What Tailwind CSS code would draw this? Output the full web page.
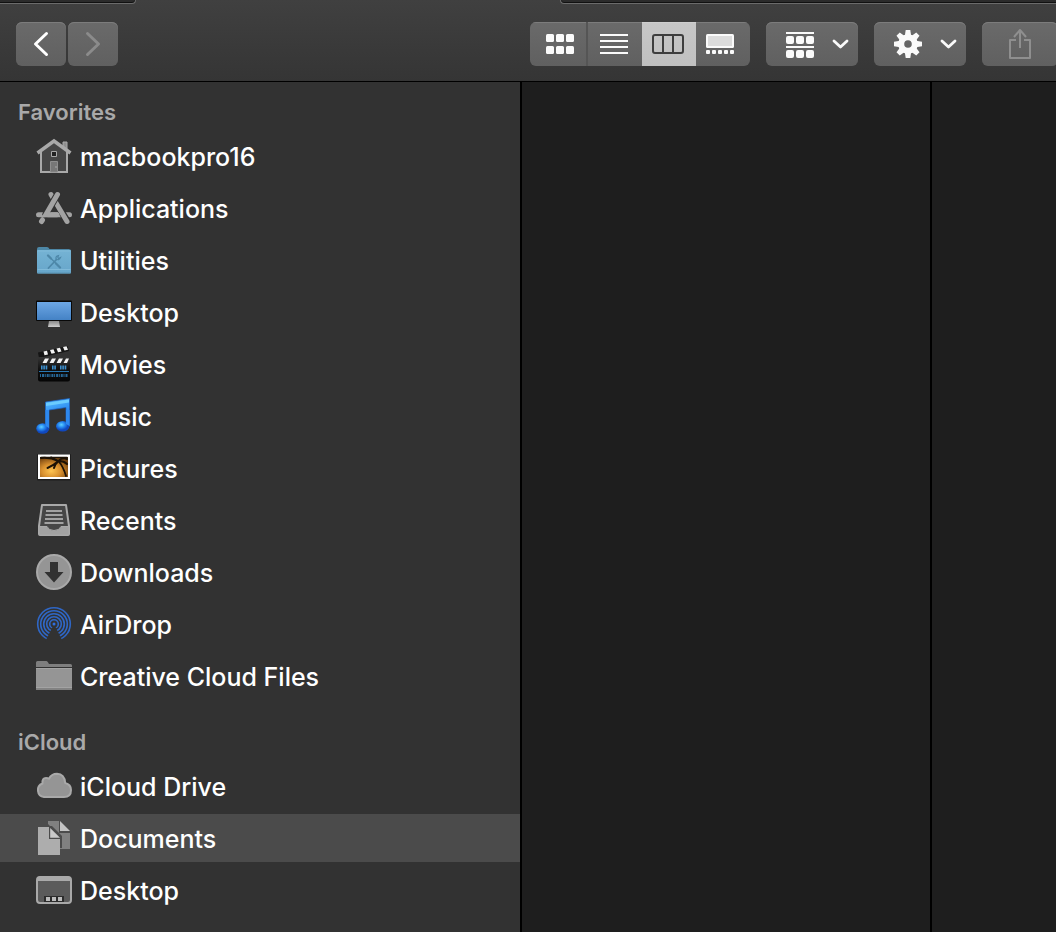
<!DOCTYPE html>
<html lang="en">
<head>
<meta charset="utf-8">
<meta name="viewport" content="width=device-width, initial-scale=1">
<title>Documents</title>
<script src="https://cdn.jsdelivr.net/npm/@tailwindcss/browser@4"></script>
</head>
<body class="flex h-screen flex-col overflow-hidden bg-[#1e1e1e] font-['Inter','Liberation_Sans',sans-serif] text-white">

<header class="shrink-0 overflow-hidden border-b border-black bg-linear-to-b from-[#404040] to-[#353535]">
  <!-- lower edges of the tabs above the toolbar -->
  <div class="flex h-1" aria-hidden="true">
    <div class="w-[136px] rounded-br-lg border-r border-b border-[#6b6b6b] bg-[#2b2b2b] shadow-[inset_0_-1px_0_#111]"></div>
    <div class="ml-[424px] flex-1 rounded-bl-lg border-b border-l border-[#6b6b6b] bg-[#2b2b2b] shadow-[inset_0_-1px_0_#111]"></div>
  </div>
  <div class="flex pt-[18px] pb-[15px]">
    <nav class="flex w-[530px] shrink-0 gap-[2px] pl-4" aria-label="History">
      <button type="button" aria-label="Back" class="flex h-11 w-[50px] items-center justify-center rounded-md bg-linear-to-b from-[#6a6a6a] to-[#606060] shadow-[inset_0_1px_0_#7c7c7c]">
        <svg width="16" height="26" viewBox="0 0 16 26" fill="none" stroke="#fff" stroke-width="3" stroke-linecap="round" stroke-linejoin="round"><path d="M13.500 2.500 2.500 13l11 10.500"/></svg>
      </button>
      <button type="button" aria-label="Forward" class="flex h-11 w-[50px] items-center justify-center rounded-md bg-linear-to-b from-[#6a6a6a] to-[#606060] shadow-[inset_0_1px_0_#7c7c7c]">
        <svg width="16" height="26" viewBox="0 0 16 26" fill="none" stroke="#8b8b8b" stroke-width="3" stroke-linecap="round" stroke-linejoin="round"><path d="m2.500 2.500 11 10.500-11 10.500"/></svg>
      </button>
    </nav>
    <div class="flex gap-4">
      <div class="flex overflow-hidden rounded-md bg-linear-to-b from-[#6a6a6a] to-[#606060]" role="group" aria-label="View">
        <button type="button" aria-label="Icon view" class="flex h-11 w-[58px] items-center border-r-2 border-[#555] pl-4 shadow-[inset_0_1px_0_#7c7c7c]">
          <svg width="28" height="20" fill="#fafafa"><rect width="8" height="8" rx="1.500"/><rect x="10" width="8" height="8" rx="1.500"/><rect x="20" width="8" height="8" rx="1.500"/><rect y="12" width="8" height="8" rx="1.500"/><rect x="10" y="12" width="8" height="8" rx="1.500"/><rect x="20" y="12" width="8" height="8" rx="1.500"/></svg>
        </button>
        <button type="button" aria-label="List view" class="flex h-11 w-[54px] items-center pl-3 shadow-[inset_0_1px_0_#7c7c7c]">
          <svg width="28" height="20" fill="#fafafa"><path d="M0 0h28v2H0zM0 6h28v2H0zM0 12h28v2H0zM0 18h28v2H0z"/></svg>
        </button>
        <button type="button" aria-label="Column view" aria-pressed="true" class="flex h-11 w-[54px] items-center bg-linear-to-b from-[#c7c7c7] to-[#c0c0c0] pl-[10px] shadow-[inset_0_1px_0_#cfcfcf]">
          <svg width="32" height="20" fill="none" stroke="#3e3e3e" stroke-width="2"><rect x="1" y="1" width="30" height="18" rx="2"/><path d="M11 1v18M21 1v18"/></svg>
        </button>
        <button type="button" aria-label="Gallery view" class="flex h-11 w-[54px] items-center pl-[10px] shadow-[inset_0_1px_0_#7c7c7c]">
          <svg width="28" height="20" fill="#fafafa"><rect width="28" height="14" rx="1.500"/><rect x="2" y="2" width="24" height="10" fill="#dcdcdc"/><rect y="16" width="4" height="4" rx="1"/><rect x="6" y="16" width="4" height="4" rx="1"/><rect x="12" y="16" width="4" height="4" rx="1"/><rect x="18" y="16" width="4" height="4" rx="1"/><rect x="24" y="16" width="4" height="4" rx="1"/></svg>
        </button>
      </div>
      <button type="button" aria-label="Group items" class="flex h-11 w-[92px] shrink-0 items-center gap-[18px] rounded-md bg-linear-to-b from-[#6a6a6a] to-[#606060] pl-5 shadow-[inset_0_1px_0_#7c7c7c]">
        <svg width="28" height="28" fill="#fafafa"><path d="M0 2h28v2H0zM0 16h28v2H0z"/><rect y="6" width="8" height="8" rx="2"/><rect x="10" y="6" width="8" height="8" rx="2"/><rect x="20" y="6" width="8" height="8" rx="2"/><rect y="20" width="8" height="8" rx="2"/><rect x="10" y="20" width="8" height="8" rx="2"/><rect x="20" y="20" width="8" height="8" rx="2"/></svg>
        <svg width="17" height="10" fill="none" stroke="#fafafa" stroke-width="2.800" stroke-linecap="round" stroke-linejoin="round"><path d="m2 2 6.500 6L15 2"/></svg>
      </button>
      <button type="button" aria-label="Actions" class="flex h-11 w-[92px] shrink-0 items-center gap-[18px] rounded-md bg-linear-to-b from-[#6a6a6a] to-[#606060] pl-5 shadow-[inset_0_1px_0_#7c7c7c]">
        <svg width="28" height="28" viewBox="-14 -14 28 28"><circle r="6.800" fill="none" stroke="#fafafa" stroke-width="6"/><g fill="#fafafa"><path id="tooth" d="M-3.200-8-2.300-14H2.300L3.200-8z"/><use href="#tooth" transform="rotate(45)"/><use href="#tooth" transform="rotate(90)"/><use href="#tooth" transform="rotate(135)"/><use href="#tooth" transform="rotate(180)"/><use href="#tooth" transform="rotate(225)"/><use href="#tooth" transform="rotate(270)"/><use href="#tooth" transform="rotate(315)"/></g></svg>
        <svg width="17" height="10" fill="none" stroke="#fafafa" stroke-width="2.800" stroke-linecap="round" stroke-linejoin="round"><path d="m2 2 6.500 6L15 2"/></svg>
      </button>
      <button type="button" aria-label="Share" class="flex h-11 w-[76px] shrink-0 items-center justify-center rounded-md bg-linear-to-b from-[#6a6a6a] to-[#606060] shadow-[inset_0_1px_0_#7c7c7c]">
        <svg width="22" height="32" fill="none" stroke="#8f8f8f" stroke-width="2" stroke-linejoin="round"><path d="M7 12H1v18h20V12h-6M11 20V2M5 9l6-7 6 7"/></svg>
      </button>
    </div>
  </div>
</header>

<main class="flex min-h-0 flex-1">
  <aside class="w-[522px] shrink-0 border-r-2 border-black bg-[#323232] pt-[10px]">
    <h2 class="flex h-10 items-center pl-[18px] text-[22px] font-semibold text-[#a9a9a9]">Favorites</h2>
    <nav class="flex flex-col gap-1 text-[25px] font-medium" aria-label="Favorites">
      <a href="#home" class="flex h-12 items-center gap-2 pl-9">
        <svg width="36" height="36" fill="none"><path d="M5.500 14v19.500h25V14L18 5z" fill="#464646"/><path d="M27 4h4v8l-4-3z" fill="#8e8e8e" stroke="#a9a9a9"/><path d="M5 14v20h26V14" stroke="#a9a9a9" stroke-width="2"/><path d="m1.500 15L18 3l16.500 12" stroke="#a9a9a9" stroke-width="3.500"/><path d="M15.500 13.500h5v5h-5z" fill="#222" stroke="#a9a9a9"/><path d="M14.500 23.500h7V34h-7z" fill="#777" stroke="#8e8e8e"/><path d="M20 28v2" stroke="#aaa"/></svg>
        <span class="pt-1">macbookpro16</span>
      </a>
      <a href="#applications" class="flex h-12 items-center gap-2 pl-9">
        <svg width="36" height="36" fill="none" stroke="#a3a3a3" stroke-width="5" stroke-linecap="round"><path d="M2.500 24.700h31"/><path d="M15 4.500 31.500 31.500" stroke="#323232" stroke-width="7"/><path d="M15 4.500 31 31.500"/><path d="M21.500 4.500 10 24" stroke="#323232" stroke-width="7"/><path d="M21.500 4.500 9.800 24.700H21M6.500 30l-1 1.500"/></svg>
        <span class="pt-1">Applications</span>
      </a>
      <a href="#utilities" class="flex h-12 items-center gap-2 pl-9">
        <svg width="36" height="36"><defs><linearGradient id="fold" x2="0" y2="1"><stop stop-color="#75b3d4"/><stop offset="1" stop-color="#67a6ca"/></linearGradient></defs><path d="M1 7q0-2 2-2h8q1.500 0 2.500 2h19q2.500 0 2.500 2v4H1z" fill="#4d87a6"/><rect x="1" y="8" width="34" height="23.500" rx="1" fill="url(#fold)"/><path d="M1.500 9h33M1.500 27.500h33" stroke="#80bad9"/><path d="M1.500 31h33" stroke="#5a93b2"/><g fill="none" stroke="#4d87a8" stroke-linecap="round"><path d="m12.500 14 10 10" stroke-width="1.200"/><path d="m12 13.500 3 3M20 21.500l4 4" stroke-width="2.200"/><path d="m12.500 26 8-8.500" stroke-width="1.800"/><path d="M22.500 13.500q-3 .5-2.500 3.500 3 2 4.500-1.500l-2 1-.7-1.300z" stroke-width="1.200"/></g></svg>
        <span class="pt-1">Utilities</span>
      </a>
      <a href="#desktop" class="flex h-12 items-center gap-2 pl-9">
        <svg width="36" height="36"><defs><linearGradient id="scr" x2="0" y2="1"><stop stop-color="#6da7e5"/><stop offset="1" stop-color="#4482c5"/></linearGradient><linearGradient id="std" x2="0" y2="1"><stop stop-color="#888"/><stop offset="1" stop-color="#ccc"/></linearGradient></defs><path d="M13 27h10l1 6H12z" fill="url(#std)"/><rect y="6.500" width="36" height="20.500" rx="1" fill="#080808"/><rect x="1" y="8" width="34" height="18" fill="url(#scr)"/></svg>
        <span class="pt-1">Desktop</span>
      </a>
      <a href="#movies" class="flex h-12 items-center gap-2 pl-9">
        <svg width="36" height="36"><defs><linearGradient id="clap" x2="0" y2="1"><stop stop-color="#353535"/><stop offset=".5" stop-color="#101010"/><stop offset="1" stop-color="#050505"/></linearGradient></defs><path d="M2 6.500 31.500 0l1.500 5L3 12z" fill="#151515"/><g fill="#f2f2f2"><path d="m7.500 5.500 3.500-.8 1 3.800-3.500.8zM14 4l3.500-.8 1.500 3.800-3.500.8zM20.500 2.500 24 1.700l1.500 3.800-3.500.8zM27 1l3.500-.7 1.500 3.500-3.500.8z"/></g><rect x="2" y="11" width="32" height="24.500" rx="2" fill="url(#clap)"/><g fill="#f2f2f2"><path d="m9 12.500h4l-2.500 4.500h-4zM16 12.500h4L17.500 17h-4zM23 12.500h4L24.500 17h-4zM30 12.500h3L31 17h-3.500z"/></g><g stroke="#3d8fcd" fill="none"><path d="M5 21.500h7M16 21.500h4M24 21.500h7" stroke-width="4" stroke-dasharray="1.600 .7"/><path d="M3 25.500h30" stroke="#2878b4"/><path d="M4 29.500h28" stroke="#266797" stroke-width="3" stroke-dasharray="1 1 2 .7"/></g></svg>
        <span class="pt-1">Movies</span>
      </a>
      <a href="#music" class="flex h-12 items-center gap-2 pl-9">
        <svg width="36" height="36"><defs><linearGradient id="note" x2=".3" y2="1"><stop stop-color="#5fc4ff"/><stop offset=".45" stop-color="#3697f5"/><stop offset="1" stop-color="#1763db"/></linearGradient><radialGradient id="ball" cx=".4" cy=".35"><stop stop-color="#5fd0ff"/><stop offset=".5" stop-color="#278af0"/><stop offset="1" stop-color="#1048bf"/></radialGradient></defs><path d="M9.500 4 33.500.500v27.500h-3.500V9.500L13 12v18.500H9.500z" fill="url(#note)" stroke="#1d63c9" stroke-width=".7"/><path d="M10 5 33 1.500v3L10 8z" fill="#6bccff"/><ellipse cx="6.700" cy="30.500" rx="6.500" ry="5.200" fill="url(#ball)"/><ellipse cx="26.700" cy="28.300" rx="6.700" ry="5.200" fill="url(#ball)"/><path d="M30 26V12h3.500v16zM9.500 28V12H13v18z" fill="#2d88ee"/></svg>
        <span class="pt-1">Music</span>
      </a>
      <a href="#pictures" class="flex h-12 items-center gap-2 pl-9">
        <svg width="36" height="36"><defs><radialGradient id="sun" cx=".4" cy=".7" r=".75"><stop stop-color="#ffc552"/><stop offset=".45" stop-color="#d9902e"/><stop offset="1" stop-color="#6e3e0d"/></radialGradient></defs><rect x="1" y="4" width="34" height="26.500" rx="1" fill="#1d1d1d"/><rect x="2" y="4.500" width="32" height="24.500" fill="#fff"/><rect x="4" y="7" width="28" height="20" fill="url(#sun)"/><g fill="none" stroke="#1c1206" stroke-linecap="round"><path d="M22.500 11q5 6 7.500 15" stroke-width="1.800"/><path d="M5 8q9-1 17.500 3M11.500 18q5-2 11-7M18 18q1-4 4.500-7M22 11q5-4 9-2M23 11q5 0 8 3M15 7.500l8 4" stroke-width="2"/><path d="M5 7.500h26" stroke-width="1.500"/></g></svg>
        <span class="pt-1">Pictures</span>
      </a>
      <a href="#recents" class="flex h-12 items-center gap-2 pl-9">
        <svg width="36" height="36" fill="none"><path d="M6 3h24l3 21v8q0 1-1 1H4q-1 0-1-1v-8z" fill="#464646" stroke="#a9a9a9" stroke-width="2" stroke-linejoin="round"/><path d="M3 24.500h8q1.500 4 7 4t7-4h8V32q0 1-1 1H4q-1 0-1-1z" fill="#a2a2a2" stroke="#a9a9a9"/><path d="M10 9h16M9.500 13h17M9 17h18M8.500 21h19" stroke="#a2a2a2" stroke-width="2"/></svg>
        <span class="pt-1">Recents</span>
      </a>
      <a href="#downloads" class="flex h-12 items-center gap-2 pl-9">
        <svg width="36" height="36"><circle cx="18" cy="18" r="17" fill="#959595" stroke="#a9a9a9" stroke-width="2"/><path d="M14 8h8v10h5.500L18 28.500 8.500 18H14z" fill="#323232"/></svg>
        <span class="pt-1">Downloads</span>
      </a>
      <a href="#airdrop" class="flex h-12 items-center gap-2 pl-9">
        <svg width="36" height="36" fill="none" stroke="#2f67c6" stroke-width="1.600"><circle cx="18" cy="18" r="16.300"/><circle cx="18" cy="18" r="13.300"/><circle cx="18" cy="18" r="10.300"/><circle cx="18" cy="18" r="7.300"/><circle cx="18" cy="18" r="4.300"/><path d="m18 18-9 18h18z" fill="#323232" stroke="none"/><circle cx="18" cy="18" r="1.500" fill="#2f6fe0" stroke="none"/></svg>
        <span class="pt-1">AirDrop</span>
      </a>
      <a href="#creative-cloud" class="flex h-12 items-center gap-2 pl-9">
        <svg width="36" height="36"><path d="M0 9V4.500Q0 3 1.500 3h9q1 0 2.500 3h21.500Q36 6 36 7.500V9z" fill="#7e7e7e"/><path d="M0 10h36v21q0 1-1 1H1q-1 0-1-1z" fill="#959595"/><path d="M0 10.500h36M0 29.500h36" stroke="#a3a3a3"/><path d="M0 31h36" stroke="#828282" stroke-width="2"/></svg>
        <span class="pt-1">Creative Cloud Files</span>
      </a>
    </nav>
    <h2 class="mt-[22px] flex h-10 items-center pl-[18px] text-[22px] font-semibold text-[#a9a9a9]">iCloud</h2>
    <nav class="flex flex-col gap-1 text-[25px] font-medium" aria-label="iCloud">
      <a href="#icloud-drive" class="flex h-12 items-center gap-2 pl-9">
        <svg width="36" height="36"><path d="M8 29a7 7 0 0 1-1.500-13.500Q6 10 10 10q2 0 3 .8Q15.500 5.800 21 5.800q7.500.2 8.200 9.200 5.800 1.500 5.800 7 0 7-7 7z" fill="#959595" stroke="#a9a9a9" stroke-width="2" stroke-linejoin="round"/></svg>
        <span class="pt-1">iCloud Drive</span>
      </a>
      <a href="#documents" aria-current="page" class="flex h-12 items-center gap-2 bg-[#4b4b4b] pl-9">
        <svg width="36" height="36"><path d="M12 1h11v12h11v16H20V12l-8-8z" fill="#808080"/><path d="M24 1v10h10z" fill="#c4c4c4"/><path d="M12 6h4l10 10v12H12z" fill="#4b4b4b"/><path d="M2 7h11v12h11v16H2z" fill="#adadad"/><path d="M14.200 8v9.800H24z" fill="#c9c9c9"/></svg>
        <span class="pt-1">Documents</span>
      </a>
      <a href="#icloud-desktop" class="flex h-12 items-center gap-2 pl-9">
        <svg width="36" height="36"><rect x="1" y="5" width="34" height="26" rx="3" fill="#5b5b5b" stroke="#a9a9a9" stroke-width="2"/><path d="M1 9V7q0-2.500 3-2.500h28q3 0 3 2.500v2z" fill="#a9a9a9"/><path d="M8 24h20v6H8z" fill="#2c2c2c"/><path d="M10 25h4v4h-4zM16 25h4v4h-4zM22 25h4v4h-4z" fill="#bcbcbc"/></svg>
        <span class="pt-1">Desktop</span>
      </a>
    </nav>
  </aside>
  <section class="w-[410px] shrink-0 border-r-2 border-black" aria-label="Column 1"></section>
  <section class="flex-1" aria-label="Column 2"></section>
</main>
</body>
</html>
